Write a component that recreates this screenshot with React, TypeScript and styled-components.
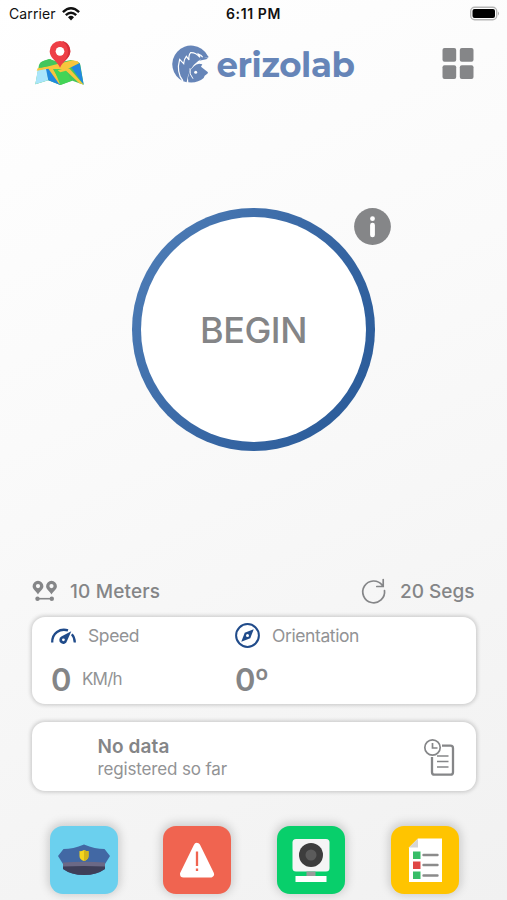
import React from "react";
import styled, { createGlobalStyle } from "styled-components";

const GlobalStyle = createGlobalStyle`
  * { box-sizing: border-box; }
  body { margin: 0; font-family: Inter, "Liberation Sans", sans-serif; }
  svg { display: block; flex: none; overflow: visible; }
`;

const Screen = styled.main`
  width: 507px;
  height: 900px;
  overflow: hidden;
  display: flex;
  flex-direction: column;
  background: linear-gradient(155deg, #ffffff 0%, #fafafa 40%, #f1f1f1 100%);
  color: #848587;
`;

const StatusBar = styled.div`
  height: 28px;
  display: grid;
  grid-template-columns: 1fr auto 1fr;
  align-items: center;
  padding: 0 7px 1px 9px;
  color: #111;
  font-size: 14px;
`;

const Carrier = styled.div`
  display: flex;
  align-items: center;
  gap: 6px;
  letter-spacing: 0.1px;
`;

const Clock = styled.div`
  font-size: 14px;
  font-weight: 600;
  letter-spacing: 0.6px;
  margin-right: 2px;
`;

const BatterySlot = styled.div`
  display: flex;
  justify-content: flex-end;
`;

const Header = styled.header`
  height: 72px;
  display: flex;
  justify-content: space-between;
  align-items: center;
  padding: 0 33px 1px 35px;
`;

const Brand = styled.div`
  display: flex;
  align-items: center;
  gap: 7px;
  color: #6685b8;
  font: 700 34px/38px Montserrat, Inter, sans-serif;
  letter-spacing: -0.4px;
`;

const BrandName = styled.span`
  padding-top: 3px;
`;

const Stage = styled.section`
  height: 458px;
  display: flex;
  justify-content: center;
  padding-top: 108px;
`;

const Dial = styled.div`
  position: relative;
  width: 243px;
  height: 243px;
`;

const BeginButton = styled.button`
  width: 100%;
  height: 100%;
  border: 9px solid transparent;
  border-radius: 50%;
  background: linear-gradient(#fff, #fff) padding-box,
    linear-gradient(120deg, #4c7bb5 10%, #3968a5 50%, #2b5c9a 90%) border-box;
  color: #848587;
  font: 550 36px/44px Inter, sans-serif;
  letter-spacing: -0.5px;
  padding: 0;
`;

const InfoBadge = styled.div`
  position: absolute;
  left: 221.5px;
  top: 0;
`;

const Limits = styled.div`
  height: 59px;
  display: flex;
  justify-content: space-between;
  align-items: center;
  padding: 7px 32.5px 0 32px;
`;

const Limit = styled.div<{ $gap: number; $spacing: number }>`
  display: flex;
  align-items: center;
  gap: ${(p) => p.$gap}px;
  font-size: 19px;
  font-weight: 550;
  letter-spacing: ${(p) => p.$spacing}px;
`;

const Card = styled.section`
  margin: 0 31.5px 0 32px;
  border-radius: 13px;
  background: #fff;
  box-shadow: 0 0 4px 1px rgba(0, 0, 0, 0.2);
`;

const Metrics = styled(Card)`
  height: 87px;
  display: grid;
  grid-template-columns: 184px 1fr;
  padding-left: 19px;
`;

const Metric = styled.div`
  display: flex;
  flex-direction: column;
`;

const MetricTitle = styled.div`
  height: 37px;
  display: flex;
  align-items: center;
  gap: 12px;
  font-size: 17.5px;
  letter-spacing: -0.4px;
  color: #929395;
`;

const MetricValue = styled.div<{ $spacing?: number }>`
  height: 50px;
  display: flex;
  align-items: center;
  gap: 10.5px;
  font-size: 31px;
  font-weight: 600;
  letter-spacing: ${(p) => p.$spacing ?? 0}px;
`;

const Unit = styled.span`
  font-size: 17px;
  font-weight: 400;
  letter-spacing: -0.8px;
  color: #929395;
`;

const History = styled(Card)`
  height: 69px;
  margin-top: 18px;
  display: flex;
  justify-content: space-between;
  align-items: center;
  padding: 2px 21px 0 65.5px;
`;

const HistoryTitle = styled.div`
  font-size: 19px;
  font-weight: 600;
  line-height: 23px;
  letter-spacing: 0.1px;
`;

const HistoryNote = styled.div`
  font-size: 17px;
  line-height: 22px;
  letter-spacing: -0.15px;
  color: #929395;
`;

const Actions = styled.nav`
  display: flex;
  justify-content: space-between;
  padding: 35px 48px 0 49.5px;
`;

const Action = styled.button<{ $color: string }>`
  width: 68px;
  height: 68px;
  border: 0;
  padding: 0;
  border-radius: 13px;
  background: ${(p) => p.$color};
  box-shadow: 0 -1px 10px 2px rgba(0, 0, 0, 0.17);
`;

const WifiIcon = () => (
  <svg width="18" height="14" viewBox="0 0 18 14" fill="none" stroke="#111" strokeWidth="2.4">
    <path d="M.9 5.1Q9-2.6 17.1 5.1M3.8 8.1Q9 3.3 14.2 8.1" />
    <path d="M6 10.2Q9 7.4 12 10.2L9 13.4Z" fill="#111" stroke="none" />
  </svg>
);

const BatteryIcon = () => (
  <svg width="30" height="14" viewBox="0 0 30 14">
    <rect x=".7" y=".2" width="26" height="12.6" rx="4" fill="#fff" stroke="#b5b5b5" strokeWidth="1.4" />
    <rect x="2.5" y="2" width="22.5" height="9" rx="2" fill="#000" />
    <path d="M28 4.5q2 2 0 4z" fill="#aaa" />
  </svg>
);

const MapIcon = () => (
  <svg width="50" height="45" viewBox="0 0 150 135">
    <path d="M12 72Q14 64 22 61L42 54 75 64 108 57 128 62Q134 64 136 71L146 131 112 119 76 132 40 118 1 130Z" fill="#43c65c" />
    <path d="M8 88L35 82 40 118 1 130Z" fill="#a9e5fb" />
    <path d="M33 84L47 82 76 132 40 118Z" fill="#2188df" />
    <path d="M108 78L134 66 146 131Z" fill="#2188df" />
    <path d="M8 82L41 76 112 58 128 61 132 67 92 87 54 84 80 130 72 128 40 83 5 89Z" fill="#f7c63d" />
    <path d="M57 84L92 84 109 119 76 132Z" fill="#43d456" />
    <path d="M68 88L92 81 104 83 146 131 132 126 93 89 76 94Z" fill="#f7c63d" />
    <path d="M26 60L46 54 60 65 40 75 16 80Z" fill="#43c65c" />
    <path d="M75 80C68 62 44 52 44 31a31 31 0 0 1 62 0c0 21-24 31-31 49Z" fill="#ee3f46" />
    <path d="M75 80C85 59 99 51 99 32c0-16-9-26-19-32 14 1 26 13 26 31 0 21-24 31-31 49Z" fill="#d72f39" />
    <circle cx="75" cy="31" r="13" fill="#fff" />
  </svg>
);

const HedgehogLogo = () => (
  <svg width="37" height="38" viewBox="0 0 111 114">
    <path d="M34 109A56 56 0 1 1 106 31L110 36Q91 38 76 50 50 68 44 112Z" fill="#6685b8" />
    <path
      d="M33 108Q12 82 23 43L35 56Q36 42 43 34L51 45Q49 31 56 23 71 22 84 37L79 27Q89 31 92 37"
      fill="none"
      stroke="#fff"
      strokeWidth="3.6"
    />
    <path d="M110 37L103 43 81 47 92 38Z" fill="#6685b8" />
    <path
      d="M49 112Q44 82 66 64 76 52 91 58L87 65 107 81Q110 84 105 87 96 91 95 99 77 115 49 112Z"
      fill="#6685b8"
    />
    <path d="M54 70Q51 88 63 101" fill="none" stroke="#fff" strokeWidth="3" />
    <circle cx="71" cy="82" r="4.5" fill="#fff" />
  </svg>
);

const GridIcon = () => (
  <svg width="32" height="32" viewBox="0 0 32 32" fill="#858688">
    <rect x=".5" y="0" width="13.7" height="13.7" rx="2" />
    <rect x="17.8" y="0" width="13.7" height="13.7" rx="2" />
    <rect x=".5" y="17.3" width="13.7" height="13.7" rx="2" />
    <rect x="17.8" y="17.3" width="13.7" height="13.7" rx="2" />
  </svg>
);

const InfoIcon = () => (
  <svg width="37" height="37" viewBox="0 0 37 37">
    <circle cx="18.5" cy="18.5" r="18.4" fill="#858688" />
    <circle cx="18.5" cy="10.7" r="2.4" fill="#fff" />
    <rect x="16.1" y="14.8" width="4.8" height="14.5" rx="2.3" fill="#fff" />
  </svg>
);

const DistanceIcon = () => (
  <svg width="26" height="21" viewBox="0 0 26 21">
    <path
      fillRule="evenodd"
      fill="#858688"
      d="M6 13.6C4.7 10.6.6 8.5.6 5.2a5.4 5.4 0 0 1 10.8 0c0 3.3-4.1 5.4-5.4 8.4ZM6 3a2.1 2.1 0 1 0 0 4.2A2.1 2.1 0 0 0 6 3ZM19.5 13.6c-1.3-3-5.4-5.1-5.4-8.4a5.4 5.4 0 0 1 10.8 0c0 3.3-4.1 5.4-5.4 8.4Zm0-10.6a2.1 2.1 0 1 0 0 4.2 2.1 2.1 0 0 0 0-4.2Z"
    />
    <path d="M6 17.7h14" stroke="#858688" strokeWidth="1.6" />
    <circle cx="5.5" cy="17.7" r="2.2" fill="#858688" />
    <circle cx="19.8" cy="17.7" r="2.2" fill="#858688" />
  </svg>
);

const RefreshIcon = () => (
  <svg width="24" height="26" viewBox="0 0 24 26" fill="none" stroke="#858688" strokeWidth="1.7" strokeLinecap="round">
    <path d="M22.5 12.5A10.9 10.9 0 1 1 20.3 7.2M21.2 1.6V8.5H14.8" />
  </svg>
);

const GaugeIcon = () => (
  <svg width="25" height="16" viewBox="0 0 25 16" fill="none" stroke="#204b8a" strokeWidth="2.3">
    <path d="M1.2 14.5C1 5 9 0 17 2.4M20.8 6.2Q23.7 9.2 23.8 14.5" />
    <path d="M20.3 3.2L10.3 8.6A3.9 3.9 0 1 0 16 12.9Z" fill="#204b8a" stroke="none" />
    <circle cx="12.4" cy="11.8" r="1.4" fill="#fff" stroke="none" />
  </svg>
);

const CompassIcon = () => (
  <svg width="25" height="25" viewBox="0 0 25 25">
    <circle cx="12.5" cy="12.5" r="11.4" fill="none" stroke="#204b8a" strokeWidth="2" />
    <path d="M18.7 6.3L15.3 15.3 6.3 18.7 9.7 9.7Z" fill="#204b8a" />
    <circle cx="12.5" cy="12.5" r="1.5" fill="#fff" />
  </svg>
);

const HistoryIcon = () => (
  <svg width="31" height="37" viewBox="0 0 31 37" fill="none" stroke="#858688">
    <path d="M18 6.7h8.5a2.5 2.5 0 0 1 2.5 2.5v24a2.5 2.5 0 0 1-2.5 2.5h-16A2.5 2.5 0 0 1 8 33.2V18" strokeWidth="2.3" />
    <circle cx="8.5" cy="8.5" r="7.7" strokeWidth="1.7" />
    <path d="M8.5 4v5h5" strokeWidth="1.7" />
    <path d="M13 17H24.5M13 22.5H24.5M13 28H24.5" strokeWidth="1.7" />
  </svg>
);

const PoliceIcon = () => (
  <svg width="68" height="68" viewBox="0 0 68 68">
    <path d="M8 30L13.5 23Q23 23 34 18.5 45 23 54.500 23L60 30 55 38V43Q46 49 34 49 22 49 13 43V38Z" fill="#4268a4" />
    <path d="M13 36.5Q34 35 55 36.5V42H13Z" fill="#6b6986" />
    <path d="M13 40.5Q34 39.5 55 40.5V43Q47 49 34 49T13 43Z" fill="#3e3f59" />
    <path d="M29.5 25Q32 25.5 34 24 36 25.5 38.500 25V30Q38.5 33.5 34 35 29.5 33.5 29.5 30Z" fill="#f5d51d" />
    <path d="M34 24Q36 25.5 38.500 25V30Q38.5 33.5 34 35Z" fill="#d4b51a" />
  </svg>
);

const AlertIcon = () => (
  <svg width="68" height="68" viewBox="0 0 68 68">
    <path d="M34 20.5L47.5 48H20.5Z" fill="#fff" stroke="#fff" strokeWidth="7" strokeLinejoin="round" />
    <path d="M34 25.5V40M34 42.5V45" stroke="#f06450" strokeWidth="2.3" />
  </svg>
);

const CameraIcon = () => (
  <svg width="68" height="68" viewBox="0 0 68 68">
    <rect x="15.5" y="13" width="37" height="32.5" rx="3.5" fill="#f5f5f5" />
    <rect x="29.5" y="45.5" width="9" height="5" fill="#9b9b9b" />
    <rect x="18.5" y="50" width="31" height="6" fill="#fff" />
    <circle cx="34" cy="29" r="12" fill="#3d3d3d" />
    <circle cx="34" cy="29" r="5.5" fill="#5b5b5b" />
  </svg>
);

const ChecklistIcon = () => (
  <svg width="68" height="68" viewBox="0 0 68 68">
    <path d="M27 12.5H51V56H18V21.5Z" fill="#fff" />
    <path d="M27 12.5V21.5H18Z" fill="#d5d5d5" />
    <path d="M22 25.5h7.5V33H22ZM22 45.5h7.5V53H22Z" fill="#36bd68" />
    <path d="M22 35.5h7.5V43H22Z" fill="#df4645" />
    <path d="M32.5 29H46.5M32.5 39H46.5M32.5 49.5H46.5" stroke="#8b8b8b" strokeWidth="2.4" strokeLinecap="round" />
  </svg>
);

export default function App() {
  return (
    <>
      <GlobalStyle />
      <Screen>
        <StatusBar>
          <Carrier>Carrier <WifiIcon /></Carrier>
          <Clock>6:11 PM</Clock>
          <BatterySlot><BatteryIcon /></BatterySlot>
        </StatusBar>
        <Header>
          <MapIcon />
          <Brand><HedgehogLogo /><BrandName>erizolab</BrandName></Brand>
          <GridIcon />
        </Header>
        <Stage>
          <Dial>
            <BeginButton>BEGIN</BeginButton>
            <InfoBadge><InfoIcon /></InfoBadge>
          </Dial>
        </Stage>
        <Limits>
          <Limit $gap={12} $spacing={0.17}><DistanceIcon />10 Meters</Limit>
          <Limit $gap={14} $spacing={0}><RefreshIcon />20 Segs</Limit>
        </Limits>
        <Metrics>
          <Metric>
            <MetricTitle><GaugeIcon />Speed</MetricTitle>
            <MetricValue>0 <Unit>KM/h</Unit></MetricValue>
          </Metric>
          <Metric>
            <MetricTitle><CompassIcon />Orientation</MetricTitle>
            <MetricValue $spacing={-0.9}>0º</MetricValue>
          </Metric>
        </Metrics>
        <History>
          <div>
            <HistoryTitle>No data</HistoryTitle>
            <HistoryNote>registered so far</HistoryNote>
          </div>
          <HistoryIcon />
        </History>
        <Actions>
          <Action $color="#6bd0ee"><PoliceIcon /></Action>
          <Action $color="#f06450"><AlertIcon /></Action>
          <Action $color="#08cf6b"><CameraIcon /></Action>
          <Action $color="#ffc400"><ChecklistIcon /></Action>
        </Actions>
      </Screen>
    </>
  );
}
